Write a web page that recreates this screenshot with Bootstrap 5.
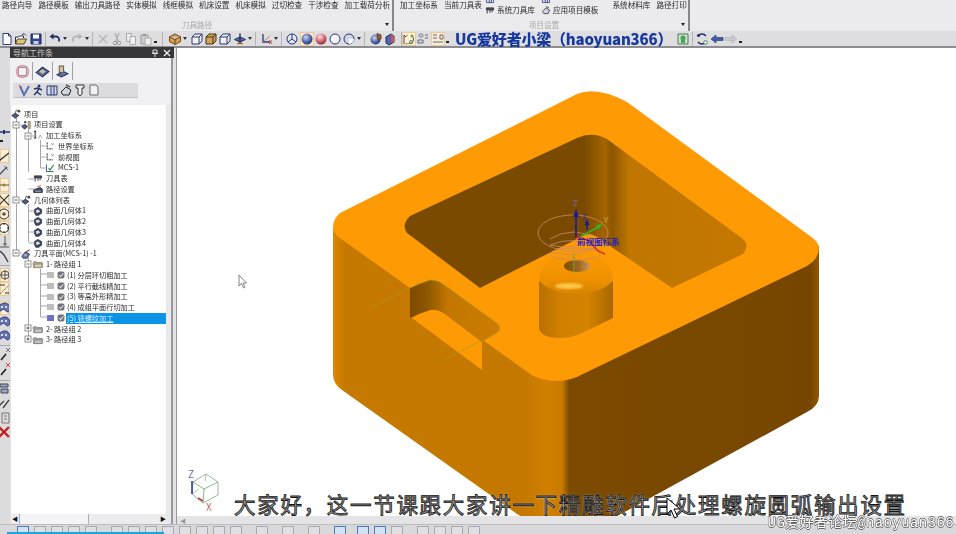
<!DOCTYPE html>
<html lang="zh">
<head>
<meta charset="UTF-8">
<title>精雕 刀具路径</title>
<link href="https://cdn.jsdelivr.net/npm/bootstrap@5.3.0/dist/css/bootstrap.min.css" rel="stylesheet">
<style>
  html, body { height: 100%; overflow: hidden; background: #dedee0; }
  body { font-family: "Noto Sans CJK SC", "Liberation Sans", sans-serif; color: #2b2b2b; }
  .app { width: 956px; height: 534px; filter: blur(.45px); }

  /* ribbon */
  .ribbon { height: 31px; background: #ebebee; font-size: 7.6px; line-height: 10px; }
  .rib-grp { height: 31px; border-right: 2px solid #85858a; }
  .rib-a { width: 394px; padding-left: 2px; }
  .rib-b { width: 296px; padding-left: 6px; }
  .rib-row { height: 21px; gap: 6px; white-space: nowrap; }
  .rib-row > * { flex: none; }
  .rib-stack { margin-top: -6px; margin-left: -3px; margin-right: 3px; gap: 1px; }
  .rib-stack svg { width: 10px; height: 10px; margin-right: 2px; }
  .rib-cap { color: #a9a9ad; height: 10px; line-height: 8px; }
  .rib-drop { right: 3px; bottom: 5px; width: 0; height: 0; border: 2px solid transparent; border-top: 3px solid #222; border-bottom: 0; }

  /* top toolbar */
  .toolbar { height: 17px; background: #dedee0; border-bottom: 2px solid #8d8d90; }
  .ti { width: 14px; height: 14px; flex: none; display: block; }
  .ti-on { background: #fbeed7; box-shadow: inset 0 0 0 1px #eccb98; }
  .drp { width: 4px; height: 0; flex: none; border: 2px solid transparent; border-top: 3px solid #333; border-bottom: 0; }
  .dot3 { width: 3px; height: 2px; background: #222; flex: none; margin-top: 7px; }
  .tsep { width: 1px; height: 14px; background: #b4b4b8; flex: none; }
  .g1 { margin-left: 1px; } .g2 { margin-left: 2px; } .g3 { margin-left: 3px; }
  .g4 { margin-left: 4px; } .g5 { margin-left: 5px; }
  .ug-title { width: 218px; flex: none; margin-left: 6px; font-size: 15px; line-height: 15px; font-weight: 900; color: #16389f; white-space: nowrap; letter-spacing: -.2px; }

  /* left icon strip */
  .strip { width: 10px; padding-top: 77px; background: #dcdcdf; overflow: hidden; }
  .strip .ti { margin-left: -3px; }
  .si-box { width: 9px; height: 14px; background: #fbeed7; box-shadow: inset 0 0 0 1px #eccb98; overflow: hidden; }
  .ssep { width: 10px; height: 1px; background: #a9a9ad; }
  .t1 { margin-top: 1px; } .t2 { margin-top: 2px; } .t4 { margin-top: 4px; } .t5 { margin-top: 5px; } .t7 { margin-top: 7px; }

  /* nav panel */
  .navpanel { width: 167px; background: #e2e2e4; border-right: 1px solid #98989c; }
  .nav-head { height: 11px; width: 164px; margin-top: -1px; background: #37373a; color: #c9c9c9; font-size: 8px; line-height: 11px; padding: 0 3px; position: relative; }
  .nav-tabs-row { height: 25px; width: 163px; padding: 4px 0 0 3px; background: #f1f1f3; border-right: 2px solid #98989c; }
  .tab-ic { width: 20px; height: 18px; border-right: 1px solid #a0a0a5; }
  .tab-ic svg { width: 15px; height: 15px; }
  .nav-tools { height: 22px; width: 163px; background: #f1f1f3; padding: 0 0 7px 3px; border-right: 2px solid #98989c; }
  .nav-tools-in { width: 125px; background: #dcdcdf; padding-left: 4px; border-bottom: 1px solid #c4c4c8; }
  .tree-wrap { width: 162px; margin-left: 1px; background: #e9e9eb; border-right: 2px solid #98989c; }
  .tree { width: 155px; padding-top: 3.5px; background: #fff; font-size: 7.2px; color: #2a2a2a; }
  .trow { height: 10.75px; line-height: 10.75px; gap: 3px; white-space: nowrap; }
  .trow svg { width: 10px; height: 10px; flex: none; }
  .p1 { padding-left: 10px; } .p2 { padding-left: 22px; } .p3 { padding-left: 34px; } .p4 { padding-left: 36px; }
  .opsq { width: 7px; height: 6px; background: #bdbdc0; flex: none; }
  .trow .opck { width: 8px; height: 8px; margin-right: -1px; }
  .trow-sel .opsq { background: #6f6fc4; }
  .sel-txt { background: #0b93e6; color: #d6eeff; text-decoration: underline; flex: 1; margin-left: -1px; padding-left: 1px; }
  .tree-lines { left: 0; top: 0; width: 155px; height: 260px; pointer-events: none; }
  .hscroll { height: 10px; background: #ececee; }
  .sb-arrow { width: 8px; color: #111; font-size: 6px; line-height: 10px; text-align: center; }
  .sb-thumb { width: 70px; height: 10px; background: #f4f4f6; border: 1px solid #b0b0b4; border-width: 0 1px; }

  /* viewport */
  .viewport { min-width: 0; background: #fff; }
  .view-svg { display: block; width: 779px; height: 468px; flex: none; }
  .view-bar { height: 9px; background: #e4e4e6; color: #999; font-size: 6px; line-height: 9px; padding-left: 3px; }

  /* bottom toolbar */
  .bottombar { height: 10px; background: #d9d9dc; border-top: 1px solid #bcbcc0; overflow: hidden; }
  .bi { width: 12px; height: 12px; flex: none; margin-top: 1px; border: 1px solid #a8a8ae; background: #e0e0e4; }
  .bi-blue { border-color: #4d79b8; background: #d3e2f2; }
  .at17 { margin-left: 17px; } .bg5 { margin-left: 5px; } .bg11 { margin-left: 11px; } .bg14 { margin-left: 14px; }

  /* overlays */
  .subtitle { left: 234px; top: 492px; font-size: 21.5px; line-height: 23px; font-weight: 400; color: #a2a2a2; letter-spacing: 1.7px; white-space: nowrap; -webkit-text-stroke: .8px #141414; text-shadow: 0 0 2px #fff; }
  .watermark { right: 2px; top: 515px; font-size: 14px; line-height: 16px; color: #fff; white-space: nowrap; letter-spacing: .4px; font-family: "Liberation Mono", "Noto Sans CJK SC", monospace; text-shadow: .6px 0 0 #666, -.6px 0 0 #666, 0 .6px 0 #666, 0 -.6px 0 #666; }
  .progress-line { left: 7px; bottom: 0; width: 157px; height: 2px; background: #1ca4dc; }
  .overlay-svg { pointer-events: none; }
  .label3d { font-family: "Noto Sans CJK SC", sans-serif; }
</style>
</head>
<body>
<svg width="0" height="0" class="position-absolute">
  <defs>
    <radialGradient id="ballBlue" cx=".4" cy=".35" r=".7"><stop offset="0" stop-color="#cfd8f2"/><stop offset=".6" stop-color="#4c66ad"/><stop offset="1" stop-color="#1d2f6e"/></radialGradient>
    <radialGradient id="ballRed" cx=".4" cy=".3" r=".75"><stop offset="0" stop-color="#f7e2e2"/><stop offset=".6" stop-color="#d2606c"/><stop offset="1" stop-color="#7b2530"/></radialGradient>
    <symbol id="i-new" viewBox="0 0 14 14"><path d="M3 1.500h5.500L11 4v8.500H3z" fill="#fff" stroke="#2d3f75"/><path d="M8.500 1.500V4H11" fill="none" stroke="#2d3f75"/></symbol>
    <symbol id="i-open" viewBox="0 0 14 14"><path d="M1.500 12V5h3l1-1h4v2" fill="#fff" stroke="#333"/><path d="M1.500 12l2-5h9l-2.500 5z" fill="#e9c36a" stroke="#444"/><path d="M8 3l2-1.500 2 2" fill="none" stroke="#2d3f75"/></symbol>
    <symbol id="i-save" viewBox="0 0 14 14"><path d="M2 2h10v10H2z" fill="#34478f" stroke="#1c2858"/><path d="M4 2.500h6v4H4z" fill="#fff"/><path d="M4.500 9h5v3h-5z" fill="#c8cfe6"/></symbol>
    <symbol id="i-undo" viewBox="0 0 14 14"><path d="M3 4.500h5c2.500 0 3.500 2 3 5" fill="none" stroke="#1f2f66" stroke-width="1.800"/><path d="M5.500 1.500L1.500 4.500l4 3z" fill="#1f2f66"/></symbol>
    <symbol id="i-redo" viewBox="0 0 14 14"><path d="M11 4.500H6C3.500 4.500 2.500 6.500 3 9.500" fill="none" stroke="#b4b4ba" stroke-width="1.800"/><path d="M8.500 1.500l4 3-4 3z" fill="#b4b4ba"/></symbol>
    <symbol id="i-x" viewBox="0 0 14 14"><path d="M3 3l8 8M11 3l-8 8" stroke="#b9b9be" stroke-width="1.600"/></symbol>
    <symbol id="i-scis" viewBox="0 0 14 14"><path d="M5 1l3 8M9 1L6 9" stroke="#aaa" stroke-width="1.200"/><circle cx="5" cy="11" r="1.800" fill="none" stroke="#999"/><circle cx="9" cy="11" r="1.800" fill="none" stroke="#999"/></symbol>
    <symbol id="i-copy" viewBox="0 0 14 14"><path d="M2.500 1.500h5v8h-5z" fill="#eee" stroke="#aaa"/><path d="M6 4.500h5.500v8H6z" fill="#f2f2f2" stroke="#aaa"/></symbol>
    <symbol id="i-paste" viewBox="0 0 14 14"><path d="M2 3h7v9H2z" fill="#ccc" stroke="#999"/><path d="M6 6h6v7H6z" fill="#eee" stroke="#aaa"/><path d="M4 2h3v2H4z" fill="#999"/></symbol>
    <symbol id="i-cube" viewBox="0 0 14 14"><path d="M7 2l5.500 2.800v4.800L7 12.500 1.500 9.600V4.800z" fill="#d99a4a" stroke="#6b4a20"/><path d="M1.500 4.800L7 7.600l5.500-2.800" fill="#c8ccd8" stroke="#6b4a20"/><path d="M7 7.600v4.900" stroke="#6b4a20"/></symbol>
    <symbol id="i-box" viewBox="0 0 14 14"><path d="M2 5l3-3h7v7l-3 3H2z" fill="#f2f2f4" stroke="#26366e"/><path d="M2 5h7v7M9 5l3-3" fill="none" stroke="#26366e"/></symbol>
    <symbol id="i-boxo" viewBox="0 0 14 14"><path d="M2 5l3-3h7v7l-3 3H2z" fill="#d2a25f" stroke="#453215"/><path d="M2 5h7v7M9 5l3-3" fill="none" stroke="#453215"/></symbol>
    <symbol id="i-flat" viewBox="0 0 14 14"><path d="M1.500 7.500L7 5l5.500 2.500L7 10z" fill="#5d6fa8" stroke="#1f2f66"/><path d="M7 1.500V12" stroke="#1f2f66" stroke-width="1.400"/><path d="M4 11.500h6" stroke="#a76a2a" stroke-width="1.400"/></symbol>
    <symbol id="i-axis" viewBox="0 0 14 14"><path d="M4 2v8h8" fill="none" stroke="#2b3a78" stroke-width="1.300"/><path d="M4 10L11 4" stroke="#c0563d" stroke-dasharray="2 1"/><path d="M10 8l3 4M13 8l-3 4" stroke="#c0563d"/></symbol>
    <symbol id="i-s1" viewBox="0 0 14 14"><circle cx="7" cy="7" r="5" fill="#e8e8f0" stroke="#26366e"/><path d="M7 2v5l4 3M7 7L3 10" fill="none" stroke="#26366e"/></symbol>
    <symbol id="i-s2" viewBox="0 0 14 14"><circle cx="7" cy="7" r="5.500" fill="url(#ballBlue)"/></symbol>
    <symbol id="i-s3" viewBox="0 0 14 14"><circle cx="7" cy="7" r="5.500" fill="url(#ballRed)"/></symbol>
    <symbol id="i-s4" viewBox="0 0 14 14"><circle cx="7" cy="7" r="5" fill="#f7f7fb" stroke="#26366e"/></symbol>
    <symbol id="i-s5" viewBox="0 0 14 14"><circle cx="7" cy="7" r="5" fill="#cfd6ee" stroke="#26366e"/><path d="M7 7h5a5 5 0 0 1-5 5z" fill="#fff"/></symbol>
    <symbol id="i-vw1" viewBox="0 0 14 14"><circle cx="6.500" cy="7.500" r="5" fill="url(#ballBlue)"/><path d="M8 1.500l4 1.500v4l-3 1z" fill="#b44848" stroke="#552"/></symbol>
    <symbol id="i-vw2" viewBox="0 0 14 14"><path d="M3 5l5-3 3 2v6l-5 3-3-2z" fill="#5363a6" stroke="#1f2f66"/><path d="M8 2l3 2v6l-3 1z" fill="#c2575c"/></symbol>
    <symbol id="i-p1" viewBox="0 0 14 14"><path d="M3 5l3-2M3 12l8-1" stroke="#8aa04a"/><path d="M2 3v9M2 3l2 2M10 4c2 2 2 4 0 7" fill="none" stroke="#444"/><circle cx="10" cy="4" r="1.500" fill="#78a040"/><circle cx="9" cy="10" r="1.500" fill="none" stroke="#4a8a5a"/></symbol>
    <symbol id="i-p2" viewBox="0 0 14 14"><path d="M3 3.500c0-2 4-2 4 0s-4 2-4 0zM2 8h5v3H2zM9 3h3M9 6h3" fill="none" stroke="#667"/></symbol>
    <symbol id="i-p3" viewBox="0 0 14 14"><path d="M2 3h4M2 6h4M2 10h10M9 3h3v4H9z" fill="none" stroke="#667"/></symbol>
    <symbol id="i-rot" viewBox="0 0 14 14"><path d="M3 4a5 5 0 0 1 8 0M11 10a5 5 0 0 1-8 0" fill="none" stroke="#26366e" stroke-width="1.500"/><circle cx="3.500" cy="3.500" r="1.600" fill="#26366e"/><circle cx="10.500" cy="10.500" r="1.800" fill="#fff" stroke="#3a8a5a"/></symbol>
    <symbol id="i-back" viewBox="0 0 14 14"><path d="M1 7l5-4v2.500h7v3H6V11z" fill="#3e5fa8" stroke="#1f2f66" stroke-width=".6"/></symbol>
    <symbol id="i-fwd" viewBox="0 0 14 14"><path d="M13 7L8 3v2.500H1v3h7V11z" fill="#c9c9cd" stroke="#b0b0b4" stroke-width=".6"/></symbol>
    <symbol id="i-grn" viewBox="0 0 14 14"><path d="M2 2h10v10H2z" fill="#cfe2cf" stroke="#4a7a55"/><circle cx="7" cy="6" r="2.600" fill="#4da35a"/><path d="M5 8v3h4V8" fill="#4da35a"/></symbol>
    <symbol id="i-ln" viewBox="0 0 14 14"><path d="M2 12L12 4" stroke="#333" stroke-width="1.300"/></symbol>
    <symbol id="i-hx" viewBox="0 0 14 14"><path d="M2 12l8-8" stroke="#555" stroke-width="1.500"/><path d="M7 3l4 4" stroke="#666"/></symbol>
    <symbol id="i-mid" viewBox="0 0 14 14"><path d="M1 7h12" stroke="#555"/><circle cx="7" cy="7" r="1.600" fill="#aa7a30"/></symbol>
    <symbol id="i-cr" viewBox="0 0 14 14"><path d="M2 2l10 10M12 2L2 12" stroke="#333" stroke-width="1.200"/></symbol>
    <symbol id="i-cir" viewBox="0 0 14 14"><circle cx="7" cy="7" r="5" fill="none" stroke="#333"/><circle cx="7" cy="7" r="1.800" fill="#555"/></symbol>
    <symbol id="i-oct" viewBox="0 0 14 14"><circle cx="7" cy="7" r="4.500" fill="#fff" stroke="#333" stroke-width="1.200"/><path d="M2 7h2M10 7h2M7 2v2M7 10v2" stroke="#333"/></symbol>
    <symbol id="i-foot" viewBox="0 0 14 14"><path d="M8 1v10M2 12h10M6 9h4" stroke="#555"/></symbol>
    <symbol id="i-tool" viewBox="0 0 14 14"><path d="M3 2l4 4 4 7" fill="none" stroke="#445" stroke-width="1.500"/></symbol>
    <symbol id="i-grid" viewBox="0 0 14 14"><circle cx="8" cy="7" r="4" fill="none" stroke="#555"/><path d="M3 7h10M8 2v10" stroke="#555"/></symbol>
    <symbol id="i-dim" viewBox="0 0 14 14"><path d="M3 12L12 3" stroke="#886a20" stroke-dasharray="2 1"/><path d="M3 3h5M8 11h4" stroke="#333"/></symbol>
    <symbol id="i-blob" viewBox="0 0 14 14"><path d="M1 9c0-5 4-7 7-7s5 3 5 6c0 2-2 4-4 2s-3-2-4-1-4 2-4 0z" fill="#6674ad" stroke="#2b3a70"/><circle cx="5" cy="6" r="1" fill="#fff"/><circle cx="9" cy="6" r="1" fill="#fff"/></symbol>
    <symbol id="i-kx" viewBox="0 0 14 14"><path d="M4 13L9 7" stroke="#222" stroke-width="1.600"/><path d="M9 1l4 4M13 1L9 5" stroke="#777"/></symbol>
    <symbol id="i-kr" viewBox="0 0 14 14"><path d="M4 13L9 7" stroke="#222" stroke-width="1.600"/><path d="M9 1l4 4M13 1L9 5" stroke="#d44"/></symbol>
    <symbol id="i-mix" viewBox="0 0 14 14"><path d="M3 3h8v3H3zM4 8h7v4H4z" fill="#9aa6c8" stroke="#445"/></symbol>
    <symbol id="i-dbl" viewBox="0 0 14 14"><path d="M1 11L7 5M6 12l6-8" stroke="#444" stroke-width="1.300"/></symbol>
    <symbol id="i-doc2" viewBox="0 0 14 14"><path d="M5 2h7v10H5z" fill="#ddd" stroke="#777"/><path d="M7 5h3M7 8h3" stroke="#777"/><path d="M2 5v7" stroke="#777"/></symbol>
    <symbol id="i-redx" viewBox="0 0 14 14"><path d="M2 2l10 10M12 2L2 12" stroke="#c22222" stroke-width="2.400"/></symbol>
    <symbol id="i-arr2" viewBox="0 0 14 14"><path d="M1 7h5M8 7h5" stroke="#26366e" stroke-width="1.300"/><path d="M6 5l2 2-2 2M8 5L6 7l2 2" fill="none" stroke="#26366e"/></symbol>
    <symbol id="t-frame" viewBox="0 0 14 14"><path d="M3 3h8v8H3z" fill="none" stroke="#b5868c" stroke-width="1.300"/><circle cx="7" cy="7" r="5.800" fill="none" stroke="#d39aa0"/></symbol>
    <symbol id="t-plate" viewBox="0 0 14 14"><path d="M1 8l6-5 6 4-6 5z" fill="#5d6ba4" stroke="#222f60"/><path d="M4 7l3-2 3 2-3 2z" fill="#d9c48c"/></symbol>
    <symbol id="t-mach" viewBox="0 0 14 14"><path d="M2 10l6-3 4 2-6 3z" fill="#6674ad" stroke="#222f60"/><path d="M4 2h4v6H4z" fill="#d8c59a" stroke="#665"/></symbol>
    <symbol id="n-a" viewBox="0 0 14 14"><path d="M3 3l4 9 5-9" fill="none" stroke="#5d6fb0" stroke-width="2"/><path d="M2 2l3 3" stroke="#c44"/></symbol>
    <symbol id="n-b" viewBox="0 0 14 14"><circle cx="8" cy="3" r="1.500" fill="#26366e"/><path d="M8 5L6 9l-3 3M6 9l4 3M3 6l4-1 4 2" fill="none" stroke="#26366e" stroke-width="1.500"/></symbol>
    <symbol id="n-c" viewBox="0 0 14 14"><path d="M2 3h10v9H2z" fill="#d5d9ea" stroke="#26366e"/><path d="M6 3v9M9 3v9" stroke="#26366e"/></symbol>
    <symbol id="n-d" viewBox="0 0 14 14"><path d="M2 9l5-5 5 3-2 5H4z" fill="#cfd3e2" stroke="#222"/><path d="M7 2l4 2" stroke="#555" stroke-width="1.500"/></symbol>
    <symbol id="n-e" viewBox="0 0 14 14"><path d="M3 2h8v3H9v6l-2 2-2-2V5H3z" fill="#eee" stroke="#333"/></symbol>
    <symbol id="n-f" viewBox="0 0 14 14"><path d="M3 2h6l2 2v8H3z" fill="#f2f2f2" stroke="#666"/></symbol>
    <symbol id="g-proj" viewBox="0 0 14 14"><path d="M1 9l5-3 5 3-5 4z" fill="#4d5c86" stroke="#222"/><path d="M6 6l1-4" stroke="#333"/><circle cx="11" cy="3" r="2" fill="#445"/><circle cx="8" cy="2" r="1.200" fill="#a84"/></symbol>
    <symbol id="g-set" viewBox="0 0 14 14"><path d="M1 9l4-3 4 3-4 4z" fill="#4d5c86" stroke="#222"/><path d="M10 2h3v10h-3z" fill="#c8b48a" stroke="#776"/><circle cx="6" cy="3" r="1.600" fill="#334"/></symbol>
    <symbol id="g-ax" viewBox="0 0 14 14"><path d="M3 1v11" stroke="#222" stroke-width="1.400"/><path d="M1.500 3L3 1l1.500 2M1.500 10L3 12l1.500-2" fill="none" stroke="#222"/><path d="M8 12l2-5 3 5" fill="none" stroke="#a88"/></symbol>
    <symbol id="g-cs" viewBox="0 0 14 14"><path d="M3 2v9h8" fill="none" stroke="#2b2b44" stroke-width="1.400" stroke-dasharray="3 1"/><path d="M9 3l3 3M12 3L9 6" stroke="#a66"/></symbol>
    <symbol id="g-mcs" viewBox="0 0 14 14"><path d="M2 2v10h10" fill="none" stroke="#3b4a8a" stroke-width="1.300"/><path d="M5 7l2 3 5-7" fill="none" stroke="#1f8a3f" stroke-width="1.500"/></symbol>
    <symbol id="g-tools" viewBox="0 0 14 14"><path d="M2 4h10v3H2z" fill="#556" stroke="#222"/><path d="M3 7v5M7 7v4M10 7v3" stroke="#444" stroke-width="1.400"/></symbol>
    <symbol id="g-path" viewBox="0 0 14 14"><path d="M1 12V8l9-3 3 2v5z" fill="#3b4a70" stroke="#222"/><path d="M6 4l5-2" stroke="#a44" stroke-width="1.300"/><path d="M3 10h8" stroke="#ddd"/></symbol>
    <symbol id="g-body" viewBox="0 0 14 14"><path d="M7 2l5 3v5l-4 3H4L2 9V5z" fill="#3e4a5e" stroke="#223"/><path d="M4 6l4-1 2 3-5 2z" fill="#d8dcec"/></symbol>
    <symbol id="g-plane" viewBox="0 0 14 14"><path d="M1 10l5-6 6 3-3 6H3z" fill="#6c7ab0" stroke="#223"/><path d="M6 5l6-4" stroke="#a33" stroke-width="1.500"/><path d="M4 8l4 1" stroke="#fff"/></symbol>
    <symbol id="g-folder" viewBox="0 0 14 14"><path d="M1 4h4l1 1h7v7H1z" fill="#b6b09a" stroke="#75705e"/><path d="M1 12l2-5h10l-1 5z" fill="#d6cca8" stroke="#8a8468"/></symbol>
    <symbol id="g-folder2" viewBox="0 0 14 14"><path d="M1 4h4l1 1h7v7H1z" fill="#a9a9a9" stroke="#6f6f6f"/><path d="M1 12l2-5h10l-1 5z" fill="#c4c4c4" stroke="#7d7d7d"/></symbol>
    <symbol id="g-ck" viewBox="0 0 14 14"><rect x="1" y="1" width="12" height="12" rx="3" fill="#72727a"/><path d="M4 7l2.500 3L11 4" fill="none" stroke="#e9e9e9" stroke-width="1.800"/></symbol>
  </defs>
</svg>

<div class="app d-flex flex-column position-relative overflow-hidden">

  <!-- ribbon -->
  <div class="ribbon d-flex flex-shrink-0">
    <div class="rib-grp rib-a d-flex flex-column position-relative">
      <div class="rib-row d-flex">
        <span>路径向导</span><span>路径模板</span><span>输出刀具路径</span><span>实体模拟</span><span>线框模拟</span><span>机床设置</span><span>机床模拟</span><span>过切检查</span><span>干涉检查</span><span>加工载荷分析</span>
      </div>
      <div class="rib-cap text-center">刀具路径</div>
      <span class="rib-drop position-absolute"></span>
    </div>
    <div class="rib-grp rib-b d-flex flex-column position-relative">
      <div class="rib-row d-flex">
        <span>加工坐标系</span><span>当前刀具表</span>
        <div class="rib-stack d-flex flex-column">
          <div class="d-flex align-items-center"><svg><use href="#n-c"/></svg></div>
          <div class="d-flex align-items-center"><svg><use href="#g-tools"/></svg>系统刀具库</div>
        </div>
        <div class="rib-stack d-flex flex-column">
          <div class="d-flex align-items-center"><svg><use href="#n-c"/></svg></div>
          <div class="d-flex align-items-center"><svg><use href="#n-d"/></svg>应用项目模板</div>
        </div>
        <span class="g5">系统材料库</span><span>路径打印</span>
      </div>
      <div class="rib-cap text-center">项目设置</div>
      <span class="rib-drop position-absolute"></span>
    </div>
  </div>

  <!-- toolbar -->
  <div class="toolbar d-flex align-items-center flex-shrink-0">
    <svg class="ti"><use href="#i-new"/></svg><svg class="ti"><use href="#i-open"/></svg><svg class="ti g1"><use href="#i-save"/></svg>
    <span class="tsep g2"></span>
    <svg class="ti g2"><use href="#i-undo"/></svg><span class="drp g1"></span>
    <svg class="ti g3"><use href="#i-redo"/></svg><span class="drp g1"></span>
    <span class="tsep g3"></span>
    <svg class="ti g3"><use href="#i-x"/></svg><svg class="ti"><use href="#i-scis"/></svg><svg class="ti"><use href="#i-copy"/></svg><svg class="ti g1"><use href="#i-paste"/></svg><span class="dot3 g1"></span>
    <span class="tsep g5"></span>
    <svg class="ti g5"><use href="#i-cube"/></svg><span class="drp g1"></span>
    <svg class="ti g3"><use href="#i-box"/></svg><svg class="ti"><use href="#i-boxo"/></svg><svg class="ti"><use href="#i-box"/></svg><svg class="ti g1"><use href="#i-flat"/></svg><span class="drp g1"></span>
    <span class="tsep g3"></span>
    <svg class="ti g3"><use href="#i-axis"/></svg><span class="drp g1"></span>
    <span class="tsep g3"></span>
    <svg class="ti g3"><use href="#i-s1"/></svg><svg class="ti g1 ti-on"><use href="#i-s2"/></svg><svg class="ti"><use href="#i-s3"/></svg><svg class="ti"><use href="#i-s4"/></svg><svg class="ti"><use href="#i-s5"/></svg><span class="drp g1"></span>
    <span class="tsep g3"></span>
    <svg class="ti g4"><use href="#i-vw1"/></svg><svg class="ti"><use href="#i-vw2"/></svg>
    <span class="tsep g4"></span>
    <svg class="ti ti-on"><use href="#i-p1"/></svg><svg class="ti"><use href="#i-p2"/></svg><svg class="ti g1 ti-on"><use href="#i-p3"/></svg><span class="dot3 g1"></span>
    <div class="ug-title">UG爱好者小梁&#xFF08;haoyuan366&#xFF09;</div>
    <svg class="ti g3"><use href="#i-grn"/></svg>
    <span class="tsep g2"></span>
    <svg class="ti g2"><use href="#i-rot"/></svg><svg class="ti g1"><use href="#i-back"/></svg><svg class="ti"><use href="#i-fwd"/></svg><span class="dot3 g1"></span>
  </div>

  <!-- main area -->
  <div class="d-flex flex-grow-1" style="min-height:0">
    <div class="strip flex-shrink-0 d-flex flex-column">
      <svg class="ti"><use href="#i-arr2"/></svg>
      <span class="dot3 t1"></span>
      <div class="si-box t7"><svg class="ti"><use href="#i-ln"/></svg></div>
      <svg class="ti"><use href="#i-hx"/></svg>
      <div class="si-box t1"><svg class="ti"><use href="#i-mid"/></svg></div>
      <div class="si-box t1"><svg class="ti"><use href="#i-cr"/></svg></div>
      <div class="si-box"><svg class="ti"><use href="#i-cir"/></svg></div>
      <div class="si-box"><svg class="ti"><use href="#i-oct"/></svg></div>
      <svg class="ti"><use href="#i-foot"/></svg>
      <svg class="ti"><use href="#i-tool"/></svg>
      <div class="ssep t2"></div>
      <div class="si-box t2"><svg class="ti"><use href="#i-grid"/></svg></div>
      <div class="si-box"><svg class="ti"><use href="#i-dim"/></svg></div>
      <div class="si-box t5"><svg class="ti"><use href="#i-blob"/></svg></div>
      <svg class="ti"><use href="#i-blob"/></svg>
      <svg class="ti"><use href="#i-blob"/></svg>
      <div class="ssep t2"></div>
      <svg class="ti t1"><use href="#i-kx"/></svg>
      <svg class="ti t1"><use href="#i-kr"/></svg>
      <div class="ssep t4"></div>
      <svg class="ti"><use href="#i-mix"/></svg>
      <svg class="ti t1"><use href="#i-dbl"/></svg>
      <svg class="ti t1"><use href="#i-doc2"/></svg>
      <svg class="ti"><use href="#i-redx"/></svg>
    </div>

    <div class="navpanel flex-shrink-0 d-flex flex-column">
      <div class="nav-head d-flex justify-content-between align-items-center">
        <span>导航工作条</span>
        <span class="d-flex gap-1 text-white"><svg width="8" height="8" viewBox="0 0 8 8"><path d="M2 1h4v3H2zM1 4.500h6M4 5v3" fill="none" stroke="#ddd"/></svg><svg width="8" height="8" viewBox="0 0 8 8"><path d="M1 1l6 6M7 1L1 7" stroke="#eee" stroke-width="1.300"/></svg></span>
      </div>
      <div class="nav-tabs-row d-flex">
        <div class="tab-ic d-flex align-items-center justify-content-center"><svg><use href="#t-frame"/></svg></div>
        <div class="tab-ic d-flex align-items-center justify-content-center"><svg><use href="#t-plate"/></svg></div>
        <div class="tab-ic d-flex align-items-center justify-content-center"><svg><use href="#t-mach"/></svg></div>
      </div>
      <div class="nav-tools">
        <div class="nav-tools-in d-flex align-items-center h-100">
          <svg class="ti"><use href="#n-a"/></svg><svg class="ti"><use href="#n-b"/></svg><svg class="ti"><use href="#n-c"/></svg><svg class="ti"><use href="#n-d"/></svg><svg class="ti"><use href="#n-e"/></svg><svg class="ti"><use href="#n-f"/></svg>
        </div>
      </div>
      <div class="tree-wrap flex-grow-1 d-flex flex-column" style="min-height:0">
        <div class="tree flex-grow-1 position-relative">
          <div class="trow d-flex align-items-center"><svg><use href="#g-proj"/></svg>项目</div>
          <div class="trow p1 d-flex align-items-center"><svg><use href="#g-set"/></svg>项目设置</div>
          <div class="trow p2 d-flex align-items-center"><svg><use href="#g-ax"/></svg>加工坐标系</div>
          <div class="trow p3 d-flex align-items-center"><svg><use href="#g-cs"/></svg>世界坐标系</div>
          <div class="trow p3 d-flex align-items-center"><svg><use href="#g-cs"/></svg>前视图</div>
          <div class="trow p3 d-flex align-items-center"><svg><use href="#g-mcs"/></svg>MCS-1</div>
          <div class="trow p2 d-flex align-items-center"><svg><use href="#g-tools"/></svg>刀具表</div>
          <div class="trow p2 d-flex align-items-center"><svg><use href="#g-path"/></svg>路径设置</div>
          <div class="trow p1 d-flex align-items-center"><svg><use href="#g-proj"/></svg>几何体列表</div>
          <div class="trow p2 d-flex align-items-center"><svg><use href="#g-body"/></svg>曲面几何体1</div>
          <div class="trow p2 d-flex align-items-center"><svg><use href="#g-body"/></svg>曲面几何体2</div>
          <div class="trow p2 d-flex align-items-center"><svg><use href="#g-body"/></svg>曲面几何体3</div>
          <div class="trow p2 d-flex align-items-center"><svg><use href="#g-body"/></svg>曲面几何体4</div>
          <div class="trow p1 d-flex align-items-center"><svg><use href="#g-plane"/></svg>刀具平面(MCS-1) -1</div>
          <div class="trow p2 d-flex align-items-center"><svg><use href="#g-folder"/></svg>1- 路径组 1</div>
          <div class="trow p4 d-flex align-items-center"><span class="opsq"></span><svg class="opck"><use href="#g-ck"/></svg>(1) 分层环切粗加工</div>
          <div class="trow p4 d-flex align-items-center"><span class="opsq"></span><svg class="opck"><use href="#g-ck"/></svg>(2) 平行截线精加工</div>
          <div class="trow p4 d-flex align-items-center"><span class="opsq"></span><svg class="opck"><use href="#g-ck"/></svg>(3) 等高外形精加工</div>
          <div class="trow p4 d-flex align-items-center"><span class="opsq"></span><svg class="opck"><use href="#g-ck"/></svg>(4) 成组平面行切加工</div>
          <div class="trow trow-sel p4 d-flex align-items-center"><span class="opsq"></span><svg class="opck"><use href="#g-ck"/></svg><span class="sel-txt">(5) 铣螺纹加工</span></div>
          <div class="trow p2 d-flex align-items-center"><svg><use href="#g-folder2"/></svg>2- 路径组 2</div>
          <div class="trow p2 d-flex align-items-center"><svg><use href="#g-folder2"/></svg>3- 路径组 3</div>
          <svg class="tree-lines position-absolute" viewBox="11 105 155 260">
            <g fill="none" stroke="#a6a6aa" stroke-width="1">
              <path d="M16.500 118v82M16.500 204v49M28.500 129v43M28.500 179h6M28.500 189h6M28.500 204v38M28.500 211h6M28.500 221h6M28.500 232h6M28.500 243h6M28.500 258v81M40.500 140v28M40.500 146h5M40.500 157h5M40.500 168h5M40.500 269v48M40.500 274h7M40.500 285h7M40.500 296h7M40.500 306h7M40.500 317h7M20 125h2M20 200h2M20 253h2M32 136h2M32 264h2M32 328h2M32 339h2"/>
            </g>
            <g fill="#fff" stroke="#777" stroke-width=".8">
              <rect x="13" y="122" width="6" height="6"/><rect x="25" y="133" width="6" height="6"/><rect x="13" y="197" width="6" height="6"/><rect x="13" y="250" width="6" height="6"/><rect x="25" y="261" width="6" height="6"/><rect x="25" y="325" width="6" height="6"/><rect x="25" y="336" width="6" height="6"/>
            </g>
            <path d="M14.500 125h3M26.500 136h3M14.500 200h3M14.500 253h3M26.500 264h3M26.500 328h3M28 326.500v3M26.500 339h3M28 337.500v3" stroke="#333" stroke-width=".8"/>
          </svg>
        </div>
        <div class="hscroll d-flex align-items-center flex-shrink-0 me-1">
          <span class="sb-arrow">&#9664;</span><span class="sb-thumb"></span><span class="flex-grow-1"></span><span class="sb-arrow">&#9654;</span>
        </div>
      </div>
    </div>

    <div class="viewport flex-grow-1 d-flex flex-column">
      <svg class="view-svg" viewBox="177 47 779 468" xmlns="http://www.w3.org/2000/svg">
        <defs>
          <linearGradient id="sideG" gradientUnits="userSpaceOnUse" x1="333" y1="0" x2="820" y2="0">
            <stop offset="0" stop-color="#dc8800"/><stop offset=".025" stop-color="#c67900"/><stop offset=".39" stop-color="#c47800"/><stop offset=".44" stop-color="#d08000"/><stop offset=".47" stop-color="#c87b00"/><stop offset=".485" stop-color="#7c4a00"/><stop offset=".98" stop-color="#764600"/><stop offset="1" stop-color="#945a00"/>
          </linearGradient>
          <linearGradient id="pocketG" gradientUnits="userSpaceOnUse" x1="405" y1="0" x2="750" y2="0">
            <stop offset="0" stop-color="#7a4a00"/><stop offset=".52" stop-color="#7a4a00"/><stop offset=".58" stop-color="#a46500"/><stop offset=".6" stop-color="#8c5600"/><stop offset=".65" stop-color="#c07600"/><stop offset="1" stop-color="#c47800"/>
          </linearGradient>
          <linearGradient id="slotG" gradientUnits="userSpaceOnUse" x1="410" y1="0" x2="500" y2="0">
            <stop offset="0" stop-color="#7c4b00"/><stop offset=".2" stop-color="#8f5800"/><stop offset=".42" stop-color="#c27700"/><stop offset="1" stop-color="#cc7d00"/>
          </linearGradient>
          <linearGradient id="bossG" gradientUnits="userSpaceOnUse" x1="539" y1="0" x2="613" y2="0">
            <stop offset="0" stop-color="#b87200"/><stop offset=".3" stop-color="#d08000"/><stop offset=".65" stop-color="#d48300"/><stop offset="1" stop-color="#a86700"/>
          </linearGradient>
          <linearGradient id="domeG" x1="0" y1="0" x2="0" y2="1">
            <stop offset="0" stop-color="#fb9a04"/><stop offset=".6" stop-color="#f09200"/><stop offset="1" stop-color="#d88500"/>
          </linearGradient>
          <linearGradient id="holeG" x1="0" y1="0" x2="1" y2="0">
            <stop offset="0" stop-color="#7a4c00"/><stop offset=".6" stop-color="#a06a20"/><stop offset="1" stop-color="#c99a60"/>
          </linearGradient>
          <filter id="soft"><feGaussianBlur stdDeviation="1.200"/></filter>
        </defs>

        <!-- body sides -->
        <path d="M333 227V373Q333 383 342 389L517 513L545 530H590L807 411Q819 405 819 395V245Z" fill="url(#sideG)"/>
        <!-- top face -->
        <path d="M340 212L577 93Q597 85 627 101L810 235Q819 241 819 247Q819 258 807 265L583 373Q560 386 533 375L340 237Q333 232 333 227Q333 218 340 212Z" fill="#fe9a04"/>
        <!-- pocket walls, the floor has the top colour -->
        <path d="M410 215L577 137Q592 130 607 138L743 238Q750 245 743 253L672 287L613 247Q600 236 590 233Q582 234 573 240L480 287L407 232Q401 224 410 215Z" fill="url(#pocketG)"/>
        <!-- slot -->
        <path d="M412 317Q420 312 430 309Q438 308 445 313L482 341V369Z" fill="#fe9a04"/>
        <path d="M410 287Q420 282 430 279Q438 279 443 283L498 323Q503 329 495 333L482 341L445 313Q438 308 430 309Q420 312 410 317Z" fill="url(#slotG)"/>
        <path d="M370 307L410 287Q420 282 430 279Q438 279 443 283L498 323Q503 329 495 333L443 359" fill="none" stroke="#a6a020" stroke-width=".8" opacity=".75"/>
        <!-- boss -->
        <path d="M539 280V328Q542 337 560 337Q572 337 582 332L613 317V280Z" fill="url(#bossG)"/>
        <path d="M539 280Q539 253 577 253Q613 253 613 280Q600 293 577 293Q552 293 539 280Z" fill="url(#domeG)"/>
        <ellipse cx="569" cy="285" rx="14" ry="3" fill="#ffc84a" filter="url(#soft)"/>
        <ellipse cx="577" cy="265" rx="13" ry="6" fill="url(#holeG)"/>
        <path d="M574 252V272" stroke="#6ba33a" stroke-width="1"/>
        <!-- helix -->
        <g fill="none" stroke="#c98a68" stroke-width=".8">
          <ellipse cx="573" cy="232" rx="35" ry="18"/>
          <path d="M550 238Q573 224 597 238Q573 250 550 244Q573 234 597 246Q573 258 552 251"/>
          <ellipse cx="575" cy="253" rx="25" ry="6"/>
        </g>
        <!-- axes -->
        <path d="M576 237V212" stroke="#1a1a9c" stroke-width="1.600"/><path d="M573 216L576 208L579 216Z" fill="#1a1a9c"/>
        <path d="M587 229V222" stroke="#1a1a9c" stroke-width="1.500"/><path d="M584.500 224L587 218L589.500 224Z" fill="#1a1a9c"/>
        <path d="M580 236L600 225" stroke="#35b030" stroke-width="1.800"/><path d="M596 224L603 223L598 229Z" fill="#35b030"/>
        <path d="M576 236Q590 238 593 244T605 253" fill="none" stroke="#d8262a" stroke-width="1.500"/>
        <g class="label3d">
          <text x="573" y="205" font-size="8" fill="#6c6cb0">Z</text>
          <text x="582" y="219" font-size="8" fill="#30308c">Z</text>
          <text x="604" y="222" font-size="8" fill="#b8b24a">Y</text>
          <text x="577" y="244" font-size="8.500" font-weight="700" fill="#2a1fbf">前视图标系</text>
        </g>
        <!-- triad -->
        <g fill="none" stroke-width=".8">
          <path d="M206 473L218 481V494L203 502L192 493L193 481Z" stroke="#7fa58a"/>
          <path d="M193 481L204 488L218 481M204 488L203 502" stroke="#6aa86a"/>
          <path d="M206 473L205 480M192 493L199 488" stroke="#a8a8a8"/>
          <path d="M192 493V480" stroke="#3a3aa8" stroke-width="1.600"/>
          <path d="M203 500L198 497" stroke="#c24040" stroke-width="1.600"/>
        </g>
        <g class="label3d">
          <text x="188" y="477" font-size="10" fill="#6a6ab4">Z</text>
          <text x="206" y="510" font-size="10" fill="#d06868">X</text>
        </g>
        <!-- idle pointer -->
        <path d="M239 274V285L241.500 282.500L243.500 287L245 286L243 282H246.500Z" fill="#fff" stroke="#666" stroke-width=".8"/>
      </svg>
      <div class="view-bar flex-shrink-0">&#9664;</div>
    </div>
  </div>

  <!-- bottom toolbar -->
  <div class="bottombar d-flex flex-shrink-0">
    <span class="bi bi-blue at17"></span><span class="bi bg5"></span><span class="bi bg5"></span><span class="bi bg5"></span><span class="bi bg5"></span>
    <span class="bi bg14"></span><span class="bi bg5"></span><span class="bi bg5"></span><span class="bi bg5"></span><span class="bi bg5"></span><span class="bi bg5"></span><span class="bi bg5"></span><span class="bi bg5"></span>
    <span class="bi bg14"></span><span class="bi bg14"></span><span class="bi bg14"></span>
    <span class="bi bi-blue bg14"></span><span class="bi bi-blue bg11"></span><span class="bi bi-blue bg5"></span><span class="bi bg5"></span>
    <span class="bi bg14"></span><span class="bi bg5"></span><span class="bi bg5"></span><span class="bi bg5"></span>
  </div>

  <!-- video overlays -->
  <div class="subtitle position-absolute">大家好&#xFF0C;这一节课跟大家讲一下精雕软件后处理螺旋圆弧输出设置</div>
  <svg class="overlay-svg position-absolute top-0 start-0" width="956" height="534" viewBox="0 0 956 534">
    <path d="M667 498V514L671 510L674.500 518L677.500 516.500L674 509H680Z" fill="#fff" stroke="#000" stroke-width="1"/>
  </svg>
  <div class="watermark position-absolute">UG爱好者论坛@haoyuan366</div>
  <div class="progress-line position-absolute"></div>
</div>

<script src="https://cdn.jsdelivr.net/npm/bootstrap@5.3.0/dist/js/bootstrap.bundle.min.js"></script>
</body>
</html>
